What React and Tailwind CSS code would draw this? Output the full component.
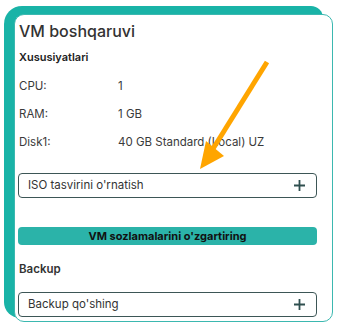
import React from "react";

const PlusIcon = () => (
  <svg width="13" height="13" viewBox="0 0 13 13" className="text-[#2f4f4f]">
    <path d="M6.5 1v11M1 6.5h11" stroke="currentColor" strokeWidth="1.8" />
  </svg>
);

const AddBox = ({ label }) => (
  <div className="flex h-[25px] w-[299px] items-center justify-between rounded-[4px] border border-[#3d5656] pl-[9px] pr-[10px]">
    <span className="text-[11.5px] text-[#333]">{label}</span>
    <PlusIcon />
  </div>
);

const SpecRow = ({ name, value }) => (
  <div className="flex h-[28px] items-center text-[11.5px] text-[#3a3a3a]">
    <span className="w-[99px]">{name}</span>
    <span>{value}</span>
  </div>
);

export default function App() {
  return (
    <div
      className="relative h-[330px] w-[339px] overflow-hidden bg-white pl-[4px] pt-[6px]"
      style={{ fontFamily: "Inter, 'Noto Sans', sans-serif" }}
    >
      {/* teal backing shape */}
      <div className="h-[312px] w-[319px] rounded-tl-[18px] rounded-tr-[12px] rounded-bl-[16px] bg-[#19b3a7] pl-[10px] pt-[8px]">
        <div className="h-[308px] w-[319px] rounded-[10px] border border-[#3bb8b0] bg-white pl-[3px] pt-[4px]">
          <h1 className="ml-[1px] h-[24px] text-[16px] font-medium leading-[24px] text-[#333]">
            VM boshqaruvi
          </h1>
          <div className="ml-[1px] mt-[5px] h-[18px] text-[11px] font-semibold leading-[18px] text-[#222]">
            Xususiyatlari
          </div>
          <div className="ml-[1px] mt-[7px]">
            <SpecRow name="CPU:" value="1" />
            <SpecRow name="RAM:" value="1 GB" />
            <SpecRow name="Disk1:" value="40 GB Standard (Local) UZ" />
          </div>
          <div className="mt-[16px]">
            <AddBox label="ISO tasvirini o'rnatish" />
          </div>
          <div className="mt-[29px] flex h-[18px] w-[299px] items-center justify-center rounded-[4px] bg-[#2bb3a9] text-[11px] font-bold text-[#111]">
            VM sozlamalarini o'zgartiring
          </div>
          <div className="ml-[1px] mt-[16px] h-[16px] text-[11.5px] font-semibold leading-[16px] text-[#333]">
            Backup
          </div>
          <div className="mt-[15px]">
            <AddBox label="Backup qo'shing" />
          </div>
        </div>
      </div>

      {/* annotation arrow */}
      <svg className="pointer-events-none absolute left-0 top-0" width="339" height="330">
        <line x1="267" y1="62" x2="211" y2="152" stroke="#ffa500" strokeWidth="5" />
        <polygon points="200,169 206,141 224,156" fill="#ffa500" />
      </svg>
    </div>
  );
}
